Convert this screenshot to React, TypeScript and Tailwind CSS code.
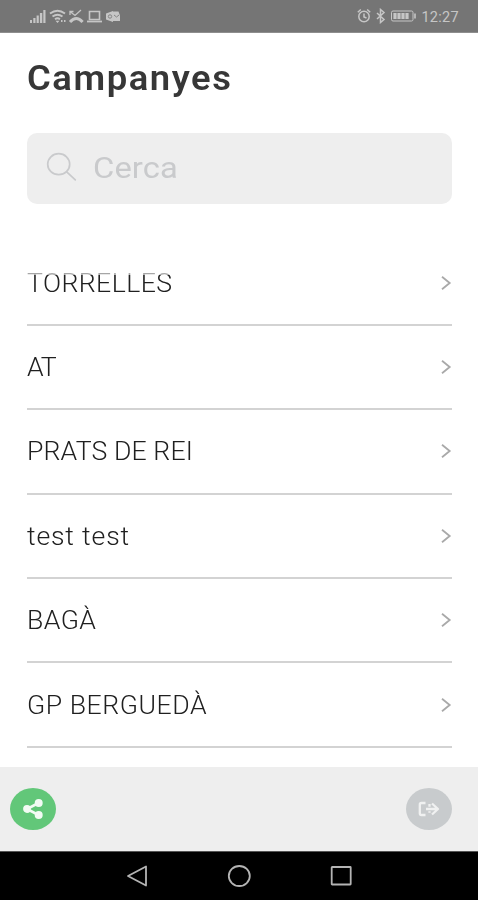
import React from "react";

type Campaign = { name: string; tracking: string };

const campaigns: Campaign[] = [
  { name: "TORRELLES", tracking: "tracking-[0.4px]" },
  { name: "AT", tracking: "tracking-[-1.2px]" },
  { name: "PRATS DE REI", tracking: "tracking-[0.1px]" },
  { name: "test test", tracking: "tracking-[0.8px]" },
  { name: "BAGÀ", tracking: "tracking-[0.4px]" },
  { name: "GP BERGUEDÀ", tracking: "tracking-[0.5px]" },
];

function StatusBar() {
  return (
    <header className="flex h-[33px] shrink-0 items-center justify-between border-b border-[#8e8e8e] bg-[#757575] pl-[30px] pr-[19px] text-[#c6c6c6]">
      <svg width="92" height="16" viewBox="0 0 92 16" fill="currentColor">
        <path d="M0 12h2v3H0zM3.300 10h2.200v5H3.300zM6.600 7.500h2.200V15H6.600zM9.900 5h2.400v10H9.900zM13.300 2h2.200v13h-2.200z" />
        <g fill="none" stroke="currentColor" strokeWidth="1.900">
          <path d="M20 5.500q7.500-5.500 15 0M22.500 8.500q5-3.500 10 0M25 11.200q2.500-1.800 5 0" />
          <path d="m40 3.500 5 4 6-5.500M40 7V3.500h3.500" strokeWidth="1.300" />
          <path d="M40 14q6.300-7 12.600 0" strokeWidth="3" />
          <path d="M59.500 3.500h10v8h-10z" strokeWidth="1.600" />
          <path d="M57 13.500h15" strokeWidth="1.800" />
        </g>
        <path d="m27.500 15-2-2.300h4zM31 12h1.500v2H31zM34 12h1.500v2H34z" />
        <path d="M76 5.500 83 3v11l-7-2.500zM82 3.500h6.500l1.500 4V13h-8z" />
        <circle cx="80" cy="8.500" r="1.700" fill="none" stroke="#858585" />
        <path d="m84 7 2.500 2L89 7" fill="none" stroke="#858585" />
      </svg>
      <div className="flex items-center">
        <svg width="62" height="16" viewBox="0 0 62 16" fill="none" stroke="currentColor" strokeWidth="1.500">
          <circle cx="7" cy="8.500" r="5.200" />
          <path d="M7 5.500v3.500l2.500 1M.8 4.300 3.800 1.500M10.200 1.500l3 2.800" />
          <path d="m20 5 7 6.500-3.500 3V1.500L27 4.500 20 11" />
          <rect x="34.500" y="3" width="21.500" height="10" rx="1.500" strokeWidth="1" />
          <path d="M38 5v6M42 5v6M46 5v6M50 5v6" strokeWidth="3.200" />
          <path d="M58 5.500v5" strokeWidth="1.600" />
        </svg>
        <span className="ml-[2px] mt-[3px] text-[14.500px] leading-4 tracking-[0.3px]">12:27</span>
      </div>
    </header>
  );
}

function SearchField() {
  return (
    <div className="ml-[27px] mr-[26px] mt-[33px] flex h-[71px] shrink-0 items-center rounded-[10px] bg-[#eeeeee] pl-[19px] text-[#c9cacc]">
      <svg width="32" height="30" viewBox="0 0 32 30" fill="none" stroke="currentColor" strokeWidth="1.700" strokeLinecap="round" className="-mt-1">
        <ellipse cx="12.700" cy="12.200" rx="11" ry="10.500" />
        <path d="m20.700 19.800 8.600 8" />
      </svg>
      <span className="-mt-0.5 ml-[15px] origin-left scale-x-[1.09] text-[30px] leading-9 tracking-[0.1px]">Cerca</span>
    </div>
  );
}

function CampaignRow({ name, tracking }: Campaign) {
  return (
    <li className="flex h-[84.400px] items-center justify-between border-b-2 border-[#d3d3d3]">
      <span className={`origin-left scale-x-[1.045] text-[25.500px] font-light leading-8 text-[#202020] ${tracking}`}>{name}</span>
      <svg width="11" height="14" viewBox="0 0 11 14" fill="none" stroke="#a9a9a9" strokeWidth="1.800">
        <path d="m1 .8 7.700 6.200L1 13.200" />
      </svg>
    </li>
  );
}

export default function App() {
  return (
    <div className="flex h-[900px] w-[478px] flex-col overflow-hidden bg-white font-['Roboto',sans-serif]">
      <StatusBar />
      <h1 className="ml-[27px] mt-[25px] h-[42px] w-max shrink-0 origin-left scale-x-[1.04] text-[35px] font-semibold leading-[42px] tracking-[1.500px] text-[#373737]">Campanyes</h1>
      <SearchField />
      <main className="ml-[27px] mr-[26px] mt-[69px] h-[494px] shrink-0 overflow-hidden [mask-image:linear-gradient(rgba(0,0,0,0.4)_2px,black_2px)]">
        <ul className="-mt-[31.600px]">
          {campaigns.map((campaign) => (
            <CampaignRow key={campaign.name} {...campaign} />
          ))}
        </ul>
      </main>
      <footer className="flex h-[84px] shrink-0 items-center justify-between bg-[#eeeeee] pl-[10px] pr-[26px]">
        <button aria-label="Comparteix" className="flex h-[42px] w-[46px] items-center justify-center rounded-[50%] bg-[#62c779]">
          <svg width="22" height="20" viewBox="0 0 22 20" fill="#f3fbf4" stroke="#f3fbf4" strokeWidth="2.600">
            <path d="M16.500 4 5 10l11.500 6" fill="none" />
            <circle cx="16.700" cy="4" r="2.700" />
            <circle cx="5" cy="10" r="2.600" />
            <circle cx="16.700" cy="16" r="2.700" />
          </svg>
        </button>
        <button aria-label="Surt" className="flex h-[42px] w-[46px] items-center justify-center rounded-[50%] bg-[#c8cbcd]">
          <svg width="22" height="16" viewBox="0 0 22 16" fill="none" stroke="#f0f1f1" strokeWidth="2.300" strokeLinejoin="round">
            <path d="M7.500 2H3.500Q1.800 2 1.800 3.700v8.600Q1.800 14 3.500 14h4" />
            <path d="M8 8h11.500M14 2.500l6 5.500-6 5.500M11.500 5.800V3M11.500 10.200v1.500" strokeWidth="2.300" />
          </svg>
        </button>
      </footer>
      <nav className="flex h-[49px] shrink-0 items-center justify-between border-t border-[#555555] bg-black pl-[126px] pr-[126px]">
        <svg width="22" height="22" viewBox="0 0 22 22" fill="none" stroke="#b4b4b4" strokeWidth="1.800" strokeLinejoin="round">
          <path d="M20 1.500v19L2 11z" />
        </svg>
        <svg width="24" height="24" viewBox="0 0 24 24" fill="none" stroke="#b4b4b4" strokeWidth="1.800">
          <ellipse cx="12.300" cy="12" rx="10.500" ry="10" />
        </svg>
        <svg width="22" height="22" viewBox="0 0 22 22" fill="none" stroke="#b4b4b4" strokeWidth="1.800" strokeLinejoin="round">
          <rect x="1.700" y="2" width="19" height="17.500" rx=".5" />
        </svg>
      </nav>
    </div>
  );
}
